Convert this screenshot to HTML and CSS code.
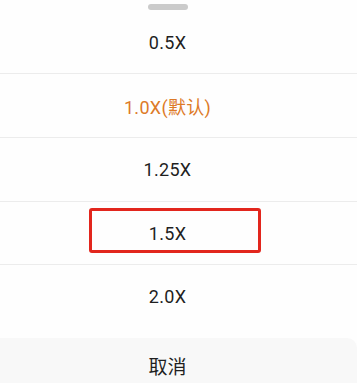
FILE: index.html
```html
<!DOCTYPE html>
<html lang="zh-CN">
<head>
<meta charset="utf-8">
<link rel="stylesheet" href="styles.css">
</head>
<body>
<div class="sheet">
  <div class="grip"><span class="grip-bar"></span></div>
  <ul class="options">
    <li class="option first">0.5X</li>
    <li class="option active">1.0X(默认)</li>
    <li class="option">1.25X</li>
    <li class="option short">1.5X</li>
    <li class="option last">2.0X</li>
  </ul>
  <div class="cancel">取消</div>
  <div class="highlight"></div>
</div>
</body>
</html>
```
FILE: styles.css
```css
html, body {
  margin: 0;
  padding: 0;
  background: #fefefe;
}
body {
  font-family: Roboto, "Noto Sans CJK SC", sans-serif;
  color: #1f1f1f;
  overflow: hidden;
}
.sheet {
  position: relative;
  width: 357px;
  height: 383px;
}
.grip {
  height: 12px;
  display: flex;
  justify-content: center;
  padding-right: 22px;
  box-sizing: border-box;
}
.grip-bar {
  display: block;
  margin-top: 4px;
  width: 40px;
  height: 6px;
  border-radius: 3px;
  background: #cbcbcb;
}
.options {
  list-style: none;
  margin: 0;
  padding: 0;
}
.option {
  display: flex;
  align-items: center;
  justify-content: center;
  padding-right: 22px;
  height: 63px;
  font-size: 18px;
  letter-spacing: 0.3px;
  border-bottom: 1px solid #ececec;
}
.option.first {
  height: 61px;
}
.option.short {
  height: 62px;
}
.option.last {
  height: 63px;
  border-bottom: none;
  margin-bottom: 10px;
}
.option.active {
  color: #dd7a27;
}
.cancel {
  height: 54px;
  display: flex;
  align-items: center;
  justify-content: center;
  padding-right: 22px;
  background: #f8f8f8;
  border-top-right-radius: 10px;
  font-size: 19px;
}
.highlight {
  position: absolute;
  left: 89px;
  top: 208px;
  width: 172px;
  height: 45px;
  box-sizing: border-box;
  border: 3px solid #e2261d;
  border-radius: 3px;
}
```
